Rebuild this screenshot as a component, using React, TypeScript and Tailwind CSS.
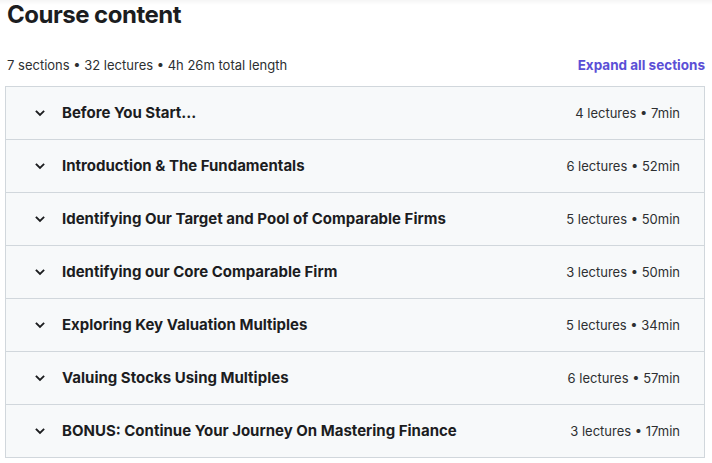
import React from "react";

type Section = { title: string; lectures: number; length: string };

const sections: Section[] = [
  { title: "Before You Start...", lectures: 4, length: "7min" },
  { title: "Introduction & The Fundamentals", lectures: 6, length: "52min" },
  { title: "Identifying Our Target and Pool of Comparable Firms", lectures: 5, length: "50min" },
  { title: "Identifying our Core Comparable Firm", lectures: 3, length: "50min" },
  { title: "Exploring Key Valuation Multiples", lectures: 5, length: "34min" },
  { title: "Valuing Stocks Using Multiples", lectures: 6, length: "57min" },
  { title: "BONUS: Continue Your Journey On Mastering Finance", lectures: 3, length: "17min" },
];

function Chevron() {
  return (
    <svg width="12" height="12" viewBox="0 0 12 12" fill="none" className="shrink-0">
      <path d="M2.5 4.5 6 8l3.5-3.5" stroke="#1c1d1f" strokeWidth="1.8" strokeLinecap="square" />
    </svg>
  );
}

export default function App() {
  return (
    <div
      className="relative min-h-[463px] w-[712px] bg-white pl-[5px] pr-[7px] text-[#2d2f31]"
      style={{ fontFamily: "Inter, 'Noto Sans', sans-serif" }}
    >
      {/* faint sticky-header shadow */}
      <div className="pointer-events-none absolute inset-x-0 top-0 h-[5px] bg-gradient-to-b from-black/[0.04] to-transparent" />

      <h2 className="pl-[2px] text-[24px] font-bold leading-[30px] tracking-[-0.5px] text-[#1c1d1f]">Course content</h2>

      <div className="mt-[25px] flex items-center justify-between pl-[2px] pb-[11px]">
        <span className="text-[13px] leading-[20px]">7 sections • 32 lectures • 4h 26m total length</span>
        <button className="text-[13.5px] font-bold leading-[20px] text-[#5b4fd6]">Expand all sections</button>
      </div>

      <div className="border border-[#d1d7dc] bg-[#f7f9fa]">
        {sections.map((s, i) => (
          <div
            key={s.title}
            className={`flex h-[52px] items-center justify-between pl-[28px] pr-[24px] ${
              i > 0 ? "h-[53px] border-t border-[#d1d7dc]" : ""
            }`}
          >
            <div className="flex items-center gap-[16px]">
              <Chevron />
              <span className="text-[15px] font-bold leading-[20px] text-[#1c1d1f]">{s.title}</span>
            </div>
            <span className="text-[13px] leading-[20px]">
              {s.lectures} lectures • {s.length}
            </span>
          </div>
        ))}
      </div>
    </div>
  );
}
